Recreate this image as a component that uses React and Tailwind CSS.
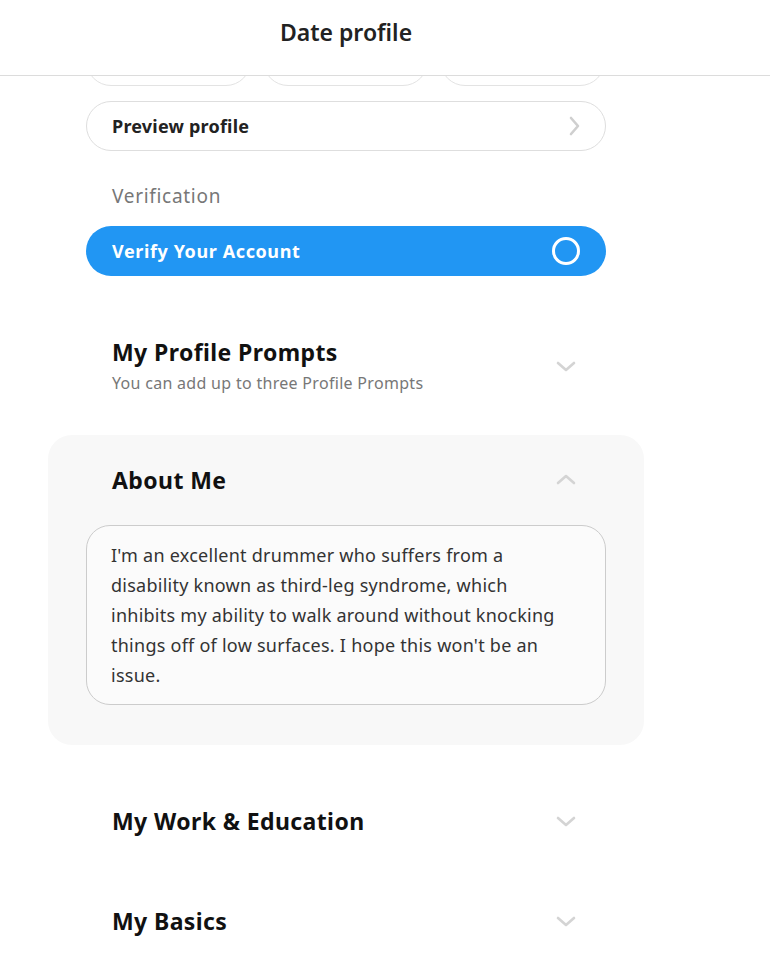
const ChevronDown = ({ up = false }) => (
  <svg
    width="22"
    height="14"
    viewBox="0 0 22 14"
    className={up ? "rotate-180" : ""}
    fill="none"
    stroke="#d4d4d4"
    strokeWidth="2.6"
    strokeLinecap="round"
    strokeLinejoin="round"
  >
    <path d="M3 4l8 7 8-7" />
  </svg>
);

const ChevronRight = () => (
  <svg width="14" height="24" viewBox="0 0 14 24" fill="none" stroke="#cfcfcf" strokeWidth="2.6" strokeLinecap="round" strokeLinejoin="round">
    <path d="M4 4l7 8-7 8" />
  </svg>
);

const Section = ({ title, subtitle, open = false }) => (
  <div className="flex items-center justify-between pl-[26px] pr-[29px]">
    <div>
      <div className="text-[23px] font-bold leading-[30px] text-[#111] tracking-[0.4px]">{title}</div>
      {subtitle && (
        <div className="text-[16px] leading-[20px] text-[#777] mt-[6px] tracking-[0.3px]">{subtitle}</div>
      )}
    </div>
    <div className={subtitle ? "mt-[2px]" : ""}>
      <ChevronDown up={open} />
    </div>
  </div>
);

export default function App() {
  return (
    <div className="min-h-screen bg-white font-['Noto_Sans',sans-serif] text-[#222]">
      <header className="h-[76px] border-b border-[#dcdcdc] bg-white">
        <div className="w-[692px] pt-[16px] text-center text-[23px] font-semibold leading-[32px] text-[#222]">
          Date profile
        </div>
      </header>

      <div className="h-[895px] overflow-hidden">
        <div className="ml-[86px] w-[520px]">
          <div className="-mt-[40px] flex gap-[12px]">
            <div className="h-[50px] w-[165px] rounded-full border border-[#e3e3e3]" />
            <div className="h-[50px] w-[165px] rounded-full border border-[#e3e3e3]" />
            <div className="h-[50px] w-[165px] rounded-full border border-[#e3e3e3]" />
          </div>

          <div className="mt-[15px] flex h-[50px] items-center justify-between rounded-full border border-[#dedede] pl-[25px] pr-[24px]">
            <span className="text-[18px] font-bold tracking-[0.2px] text-[#222]">Preview profile</span>
            <ChevronRight />
          </div>

          <div className="mt-[32px] pl-[26px] text-[19px] leading-[26px] text-[#777] tracking-[0.7px]">Verification</div>

          <div className="mt-[17px] flex h-[50px] items-center justify-between rounded-full bg-[#2196f3] pl-[26px] pr-[26px]">
            <span className="text-[18px] font-bold tracking-[0.6px] text-white">Verify Your Account</span>
            <div className="h-[28px] w-[28px] rounded-full border-[3px] border-white" />
          </div>

          <div className="mt-[61px]">
            <Section title="My Profile Prompts" subtitle="You can add up to three Profile Prompts" />
          </div>
        </div>

        <div className="ml-[48px] mt-[42px] w-[596px] rounded-[24px] bg-[#f8f8f8] px-[38px] pt-[30px] pb-[40px]">
          <Section title="About Me" open />
          <div className="mt-[30px] rounded-[24px] border border-[#cccccc] bg-[#fbfbfb] pl-[24px] pr-[29px] pt-[14px] pb-[14px] text-[18px] leading-[30px] tracking-[0.25px] text-[#333]">
            I'm an excellent drummer who suffers from a disability known as third-leg syndrome, which inhibits my ability to walk around without knocking things off of low surfaces. I hope this won't be an issue.
          </div>
        </div>

        <div className="ml-[86px] w-[520px]">
          <div className="mt-[61px]">
            <Section title="My Work & Education" />
          </div>
          <div className="mt-[70px]">
            <Section title="My Basics" />
          </div>
        </div>
      </div>
    </div>
  );
}
